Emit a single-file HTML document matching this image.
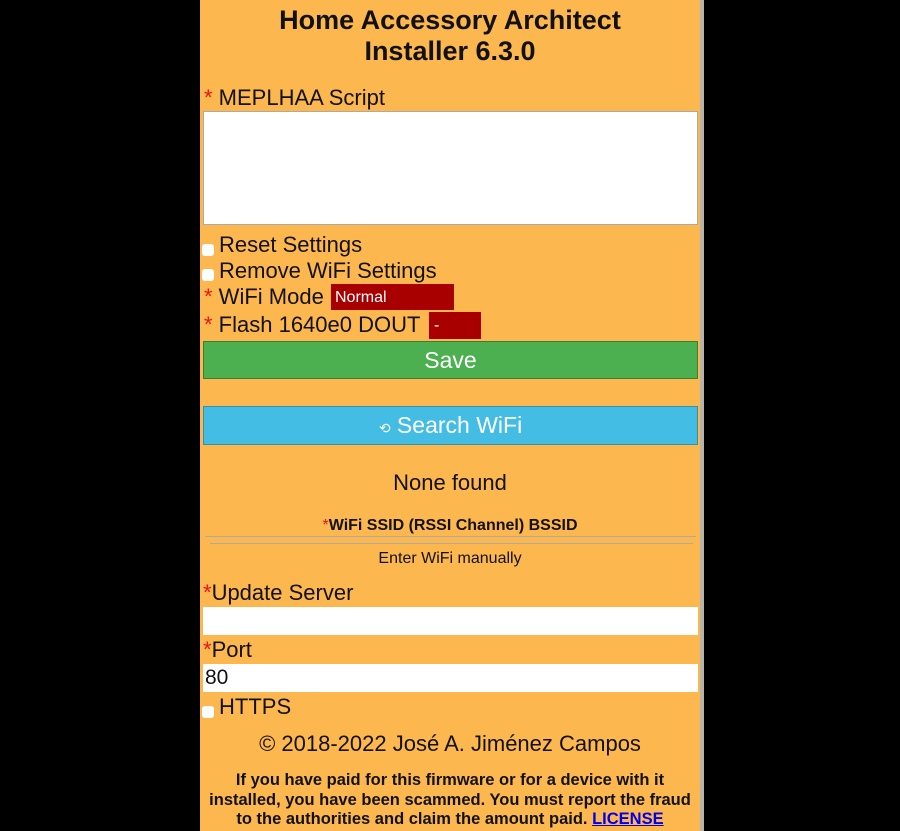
<!DOCTYPE html>
<html><head><style>
body{margin:0;background:#000;width:900px;height:831px;overflow:hidden;font-family:"Liberation Sans",Arial,Helvetica,sans-serif;color:#111}
.p{position:absolute;left:200px;top:0;width:500px;height:831px;background:#fdb74f}
.g{position:absolute;left:700px;top:0;width:4px;height:831px;background:#b9b2a6}
.a{position:absolute;white-space:nowrap}
.r{color:#e8151a}
.cb{position:absolute;width:12px;height:12px;background:#fff;border-radius:3px}
.in{position:absolute;left:203px;width:495px;background:#fff}
</style></head><body>
<div class="p"></div><div class="g"></div>
<div class="a" style="left:200px;width:500px;top:5px;text-align:center;font-weight:bold;font-size:27px;line-height:31px">Home Accessory Architect<br>Installer 6.3.0</div>
<div class="a" style="left:204px;top:85px;font-size:22px"><span class="r">*</span> MEPLHAA Script</div>
<div class="in" style="top:111px;height:112px;border:1px solid #aaa;width:493px"></div>
<div class="cb" style="left:202px;top:244px"></div>
<div class="a" style="left:219px;top:232px;font-size:22px">Reset Settings</div>
<div class="cb" style="left:202px;top:269px"></div>
<div class="a" style="left:219px;top:258px;font-size:22px">Remove WiFi Settings</div>
<div class="a" style="left:204px;top:284px;font-size:22px"><span class="r">*</span> WiFi Mode</div>
<div class="a" style="left:331px;top:284px;width:123px;height:26px;background:#a80000;color:#fff;font-size:16px;line-height:28px;padding-left:4px;box-sizing:border-box">Normal</div>
<div class="a" style="left:204px;top:312px;font-size:22px"><span class="r">*</span> Flash 1640e0 DOUT</div>
<div class="a" style="left:429px;top:312px;width:52px;height:27px;background:#a80000;color:#fff;font-size:16px;line-height:28px;padding-left:5px;box-sizing:border-box">-</div>
<div class="a" style="left:203px;top:341px;width:495px;height:38px;box-sizing:border-box;background:#4caf50;border:1px solid #3a7f33;color:#fff;font-size:23px;text-align:center;line-height:36px">Save</div>
<div class="a" style="left:203px;top:406px;width:495px;height:39px;box-sizing:border-box;background:#44bde5;border:1px solid #3a8fa8;color:#fff;font-size:23px;text-align:center;line-height:37px"><span style="font-size:14px">⟲</span> Search WiFi</div>
<div class="a" style="left:200px;width:500px;top:470px;text-align:center;font-size:22px">None found</div>
<div class="a" style="left:200px;width:500px;top:517px;text-align:center;font-size:16px;font-weight:bold"><span class="r" style="font-weight:normal">*</span>WiFi SSID (RSSI Channel) BSSID</div>
<div class="a" style="left:205px;top:536px;width:491px;height:1px;background:#aaa"></div>
<div class="a" style="left:210px;top:543px;width:483px;height:1px;background:#aaa"></div>
<div class="a" style="left:200px;width:500px;top:550px;text-align:center;font-size:16px">Enter WiFi manually</div>
<div class="a" style="left:203px;top:580px;font-size:22px"><span class="r">*</span>Update Server</div>
<div class="in" style="top:607px;height:28px"></div>
<div class="a" style="left:203px;top:637px;font-size:22px"><span class="r">*</span>Port</div>
<div class="in" style="top:664px;height:28px;font-size:21px;line-height:28px;padding-left:2px;box-sizing:border-box">80</div>
<div class="cb" style="left:202px;top:706px"></div>
<div class="a" style="left:219px;top:694px;font-size:22px">HTTPS</div>
<div class="a" style="left:200px;width:500px;top:731px;text-align:center;font-size:22px">© 2018-2022 José A. Jiménez Campos</div>
<div class="a" style="left:204px;width:492px;top:771px;text-align:center;font-size:16.5px;font-weight:bold;line-height:19.5px;white-space:normal">If you have paid for this firmware or for a device with it installed, you have been scammed. You must report the fraud to the authorities and claim the amount paid. <span style="color:#00e;text-decoration:underline">LICENSE</span></div>
</body></html>
